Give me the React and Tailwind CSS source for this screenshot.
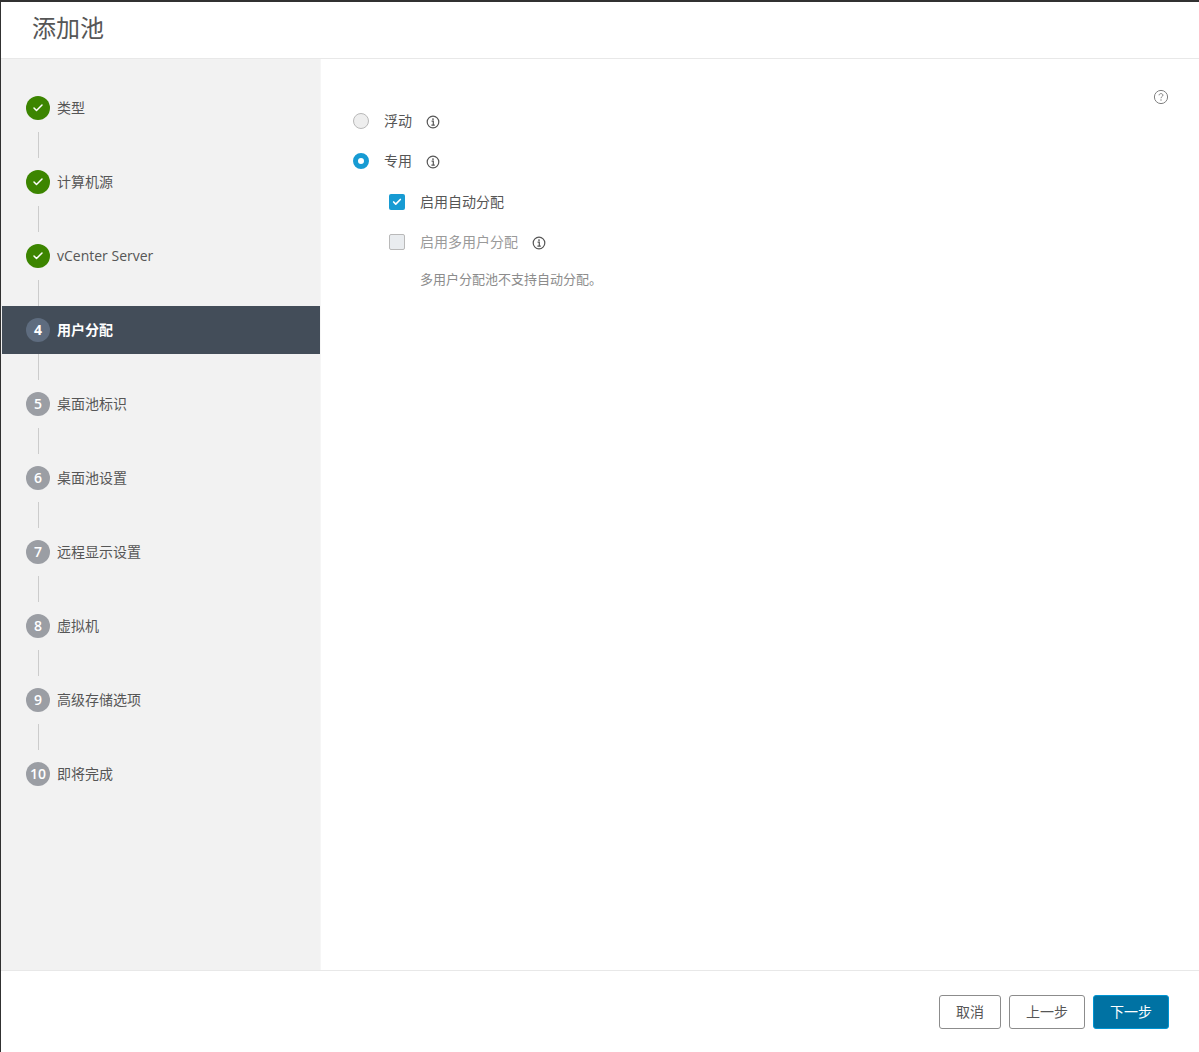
import { Check } from "lucide-react";

const steps = [
  { id: 1, title: "类型", done: true },
  { id: 2, title: "计算机源", done: true },
  { id: 3, title: "vCenter Server", done: true },
  { id: 4, title: "用户分配", active: true },
  { id: 5, title: "桌面池标识" },
  { id: 6, title: "桌面池设置" },
  { id: 7, title: "远程显示设置" },
  { id: 8, title: "虚拟机" },
  { id: 9, title: "高级存储选项" },
  { id: 10, title: "即将完成" },
];

function InfoIcon() {
  return (
    <svg width="14" height="14" viewBox="0 0 14 14" fill="none" className="shrink-0 translate-y-px">
      <circle cx="7" cy="7" r="5.8" stroke="#565656" strokeWidth="1.2" />
      <circle cx="7" cy="4.1" r="0.9" fill="#565656" />
      <path d="M5.6 6.1H7.3V10M5.4 10.2H8.8" stroke="#565656" strokeWidth="1.2" />
    </svg>
  );
}

function StepBadge({ step }) {
  if (step.done) {
    return (
      <div className="w-6 h-6 rounded-full bg-[#3c8500] flex items-center justify-center shrink-0">
        <Check className="w-3 h-3 text-white" strokeWidth={3} />
      </div>
    );
  }
  return (
    <div
      className={
        step.active
          ? "w-6 h-6 rounded-full bg-[#5e6c7f] text-white text-[14px] leading-5 font-bold flex items-center justify-center shrink-0"
          : "w-6 h-6 rounded-full bg-[#9b9ea4] text-white text-[14px] leading-5 font-semibold flex items-center justify-center shrink-0"
      }
    >
      {step.id}
    </div>
  );
}

export default function App() {
  return (
    <div className="h-screen flex flex-col bg-white border-t-2 border-l border-[#313131] text-[#565656] text-[14px] overflow-hidden font-['Open_Sans','Noto_Sans_CJK_SC',sans-serif]">
      {/* header */}
      <div className="h-[57px] shrink-0 flex items-center pl-[31px] border-b border-[#e8e8e8]">
        <h1 className="text-[24px] font-normal text-[#565656] pb-1">添加池</h1>
      </div>

      <div className="flex flex-1 min-h-0">
        {/* steps */}
        <div className="w-[320px] shrink-0 bg-[#f2f2f2] border-r border-[#f6f6f6] pt-[25px]">
          {steps.map((step, i) => (
            <div key={step.id}>
              <div
                className={
                  step.active
                    ? "h-12 ml-px flex items-center pl-6 gap-[7px] bg-[#434d59] text-white font-bold"
                    : "h-12 ml-px flex items-center pl-6 gap-[7px]"
                }
              >
                <StepBadge step={step} />
                <span className="leading-5 pb-px">{step.title}</span>
              </div>
              {i < steps.length - 1 && <div className="w-px h-[26px] ml-[37px] bg-[#cccccc]" />}
            </div>
          ))}
        </div>

        {/* form */}
        <div className="flex-1 relative pl-8 pt-[52px]">
          <svg width="16" height="16" viewBox="0 0 16 16" fill="none" className="absolute top-[30px] right-[30px]">
            <circle cx="8" cy="8" r="6.6" stroke="#808080" />
            <path d="M6.1 6.3C6.1 5.2 7 4.6 8 4.6C9.1 4.6 9.9 5.3 9.9 6.2C9.9 7.6 8 7.6 8 9.2" stroke="#808080" />
            <circle cx="8" cy="11" r="0.7" fill="#808080" />
          </svg>

          <div className="flex items-center h-5">
            <div className="w-4 h-4 rounded-full bg-[#eeeeee] border border-[#b9b9b9] shrink-0" />
            <span className="ml-[15px] mr-[14px] leading-5 pb-px">浮动</span>
            <InfoIcon />
          </div>

          <div className="flex items-center h-5 mt-5">
            <div className="w-4 h-4 rounded-full bg-white border-[5px] border-[#179bd3] shrink-0" />
            <span className="ml-[15px] mr-[14px] leading-5 pb-px">专用</span>
            <InfoIcon />
          </div>

          <div className="flex items-center h-5 mt-[21px] pl-9">
            <div className="w-4 h-4 rounded-[2px] bg-[#179bd3] flex items-center justify-center shrink-0">
              <Check className="w-2.5 h-2.5 text-white" strokeWidth={4} />
            </div>
            <span className="ml-[15px] leading-5 pb-px">启用自动分配</span>
          </div>

          <div className="flex items-center h-5 mt-[20px] pl-9">
            <div className="w-4 h-4 rounded-[2px] bg-[#e9ecef] border border-[#b9b9b9] shrink-0" />
            <span className="ml-[15px] mr-[14px] leading-5 pb-px text-[#9a9a9a]">启用多用户分配</span>
            <InfoIcon />
          </div>

          <div className="mt-[17px] pl-[67px] text-[13px] leading-5 text-[#8c8c8c]">多用户分配池不支持自动分配。</div>
        </div>
      </div>

      {/* footer */}
      <div className="h-[82px] shrink-0 border-t border-[#e8e8e8] flex justify-end items-start gap-2 pt-6 pr-[30px]">
        <button className="w-[62px] h-[34px] rounded-[3px] border border-[#8c8c8c] bg-white text-[#565656] leading-5">取消</button>
        <button className="w-[76px] h-[34px] rounded-[3px] border border-[#8c8c8c] bg-white text-[#565656] leading-5">上一步</button>
        <button className="w-[76px] h-[34px] rounded-[3px] border border-[#0095d3] bg-[#0072a3] text-white leading-5">下一步</button>
      </div>
    </div>
  );
}
